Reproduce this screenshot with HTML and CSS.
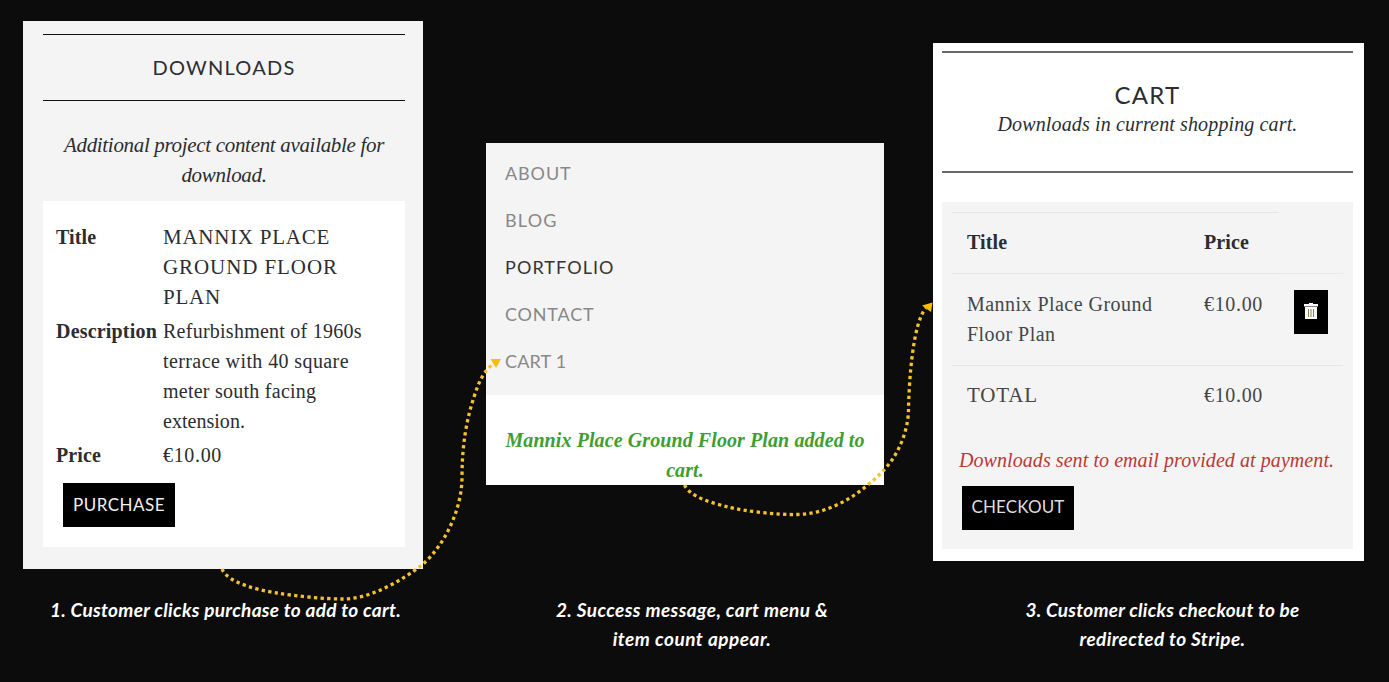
FILE: index.html
```html
<!DOCTYPE html>
<html lang="en">
<head>
<meta charset="utf-8">
<title>Download purchase flow</title>
<link rel="stylesheet" href="styles.css">
</head>
<body>
<main class="flow">
  <section class="panel downloads">
    <h2 class="panel-title">DOWNLOADS</h2>
    <p class="intro">Additional project content available for<br>download.</p>
    <div class="card">
      <dl class="details">
        <dt>Title</dt>
        <dd class="caps"><span class="line-a">MANNIX PLACE</span><br><span class="line-b">GROUND FLOOR</span><br>PLAN</dd>
        <dt class="wide">Description</dt>
        <dd class="description">Refurbishment of 1960s<br><span class="loose">terrace with 40 square</span><br>meter south facing<br><span class="tight">extension.</span></dd>
        <dt>Price</dt>
        <dd class="amount">€10.00</dd>
      </dl>
      <button class="btn purchase">PURCHASE</button>
    </div>
  </section>

  <section class="panel menu-panel">
    <nav class="menu">
      <a class="about">ABOUT</a>
      <a class="blog">BLOG</a>
      <a class="active">PORTFOLIO</a>
      <a class="contact">CONTACT</a>
      <a class="cart-link">CART 1</a>
    </nav>
    <p class="success">Mannix Place Ground Floor Plan added to<br>cart.</p>
  </section>

  <section class="panel cart">
    <header class="cart-head">
      <h2>CART</h2>
      <p>Downloads in current shopping cart.</p>
    </header>
    <div class="cart-body">
      <div class="row head"><b class="name">Title</b><b class="price">Price</b><i></i></div>
      <div class="row item"><span class="name">Mannix Place Ground<br>Floor Plan</span><span class="price amount">€10.00</span>
        <button class="trash" aria-label="Remove"><svg width="14" height="16" viewBox="0 0 14 16"><path d="M5 0h4v1h5v2.400H0V1h5z" fill="#fff"/><path d="M1 4h12v12H1z" fill="#fff"/><path d="M4.500 6v8M7 6v8M9.500 6v8" stroke="#8c8450" stroke-width="1"/></svg></button></div>
      <div class="row total"><span class="name">TOTAL</span><span class="price amount">€10.00</span><i></i></div>
      <p class="note">Downloads sent to email provided at payment.</p>
      <button class="btn checkout">CHECKOUT</button>
    </div>
  </section>

  <p class="caption c1">1. Customer clicks purchase to add to cart.</p>
  <p class="caption c2">2. Success message, cart menu &amp;<br><span class="second">item count appear.</span></p>
  <p class="caption c3">3. Customer clicks checkout to be<br><span class="second">redirected to Stripe.</span></p>

  <svg class="arrows" width="1389" height="682" viewBox="0 0 1389 682">
    <g fill="none" stroke="#f5c22b" stroke-width="3.300" stroke-dasharray="3.300 3.300">
      <path d="M222 569C228 583 258 590 277 593S322 599 343 599C370 599 401 581 422 565C444 546 462 510 462 477C462 447 466 421 474 397C479 381 484 371 493 364"/>
      <path d="M684.500 485C690 497 712 503 728 507S777 515 797 514.500C832 514 861 493 882 472C898 456 908 432 908.500 410C909 380 913 322 926 308"/>
    </g>
    <path class="head" d="M490.500 359H501L496 368z"/>
    <path class="head" d="M932.500 302.500L922 305.500L931 312z"/>
  </svg>
</main>
</body>
</html>
```
FILE: styles.css
```css
* { box-sizing: border-box; margin: 0; padding: 0; }
body { width: 1389px; height: 682px; overflow: hidden; background: #0c0c0c; color: #2b2d31; font: 20px/30px "Liberation Serif", serif; }
.flow { position: relative; height: 682px; display: grid; grid-template-columns: 400px 398px 431px; grid-template-rows: 595px 87px; padding-left: 23px; align-items: start; }
.menu-panel, .c2 { margin-left: 63px; margin-right: -63px; }
.cart, .c3 { margin-left: 112px; margin-right: -112px; }
.panel, .caption { white-space: nowrap; }
h2, .btn, .menu { font-family: Lato, sans-serif; font-weight: 400; }

/* Downloads panel */
.downloads { margin-top: 21px; height: 548px; padding: 13px 18px 0 20px; background: #f4f4f4; }
.panel-title { height: 67px; border: solid #111; border-width: 1px 0; font-size: 20px; line-height: 65px; text-align: center; letter-spacing: 1.24px; }
.intro { margin-top: 29px; text-align: center; font-style: italic; font-size: 21px; letter-spacing: -.32px; }
.card { margin-top: 11px; height: 346px; padding: 21px 0 0 13px; background: #fff; }
.details { display: grid; grid-template-columns: 107px 1fr; row-gap: 4px; }
dt, b { font-weight: 700; letter-spacing: .1px; }
.wide { letter-spacing: .19px; }
.caps { font-size: 21px; letter-spacing: .79px; }
.line-a { letter-spacing: .74px; }
.line-b { letter-spacing: .92px; }
.description { letter-spacing: .25px; }
.loose { letter-spacing: .4px; }
.tight { letter-spacing: .03px; }
.amount { letter-spacing: .67px; }
.btn { display: block; height: 44px; width: 112px; border: 0; background: #000; color: #f2f2f2; font-size: 17px; text-align: center; }
.purchase { margin: 13px 0 0 7px; padding-bottom: 2px; letter-spacing: .48px; }

/* Menu panel */
.menu-panel { margin-top: 143px; height: 342px; background: #fff; }
.menu { height: 252px; padding: 7px 0 0 19px; background: #f4f4f4; font-size: 18px; line-height: 47px; color: #888; display: flex; flex-direction: column; }
.menu .active { color: #333; letter-spacing: 1.08px; }
.about { letter-spacing: .9px; }
.blog { letter-spacing: 1.2px; }
.contact { letter-spacing: .8px; }
.cart-link { letter-spacing: .18px; }
.success { padding-top: 30px; text-align: center; color: #3f9e31; font-weight: 700; font-style: italic; letter-spacing: .09px; }

/* Cart panel */
.cart { margin-top: 43px; height: 518px; padding: 8px 11px 0 9px; background: #fff; }
.cart-head { height: 122px; border: solid #6a6a6a; border-width: 2px 0; padding-top: 27px; text-align: center; }
.cart-head h2 { font-size: 24px; line-height: 30px; letter-spacing: 1.27px; }
.cart-head p { font-style: italic; letter-spacing: .13px; margin-top: -1px; }
.cart-body { margin-top: 29px; height: 347px; padding: 10px 10px 0; background: #f4f4f4; }
.row { display: grid; grid-template-columns: 237px 90px 64px; color: #44464a; }
.row > * { padding-top: 15px; }
.row .name, .row .price { padding-left: 15px; }
.head > b { height: 62px; color: #2b2d31; border: solid #e6e6e6; border-width: 1px 0; padding-top: 14px; }
.head > i { height: 62px; border-bottom: 1px solid #e9e9e9; }
.item { height: 92px; border-bottom: 1px solid #e6e6e6; }
.item .name { letter-spacing: .46px; }
.row .trash { width: 34px; height: 44px; margin: 16px 0 0 15px; border: 0; padding: 0 0 2px; background: #000; display: grid; place-items: center; }
.total { height: 79px; }
.total > * { padding-top: 14px; }
.total .name { font-size: 21px; letter-spacing: .84px; }
.note { margin-left: 7px; color: #b83a34; font-style: italic; letter-spacing: .07px; }
.checkout { margin: 11px 0 0 10px; padding-bottom: 3px; color: #ddd; letter-spacing: .13px; }

/* Step captions */
.caption { color: #fff; font: italic 700 19px/29px Lato, sans-serif; text-align: center; }
.c1 { padding-left: 5px; letter-spacing: .3px; }
.c2 { padding-left: 14px; letter-spacing: .39px; }
.c3 { padding-left: 28px; letter-spacing: .24px; }
.c2 .second { letter-spacing: .5px; }
.c3 .second { letter-spacing: .38px; }

.arrows { position: absolute; left: 0; top: 0; }
.arrows .head { fill: #fbbc05; }
```
